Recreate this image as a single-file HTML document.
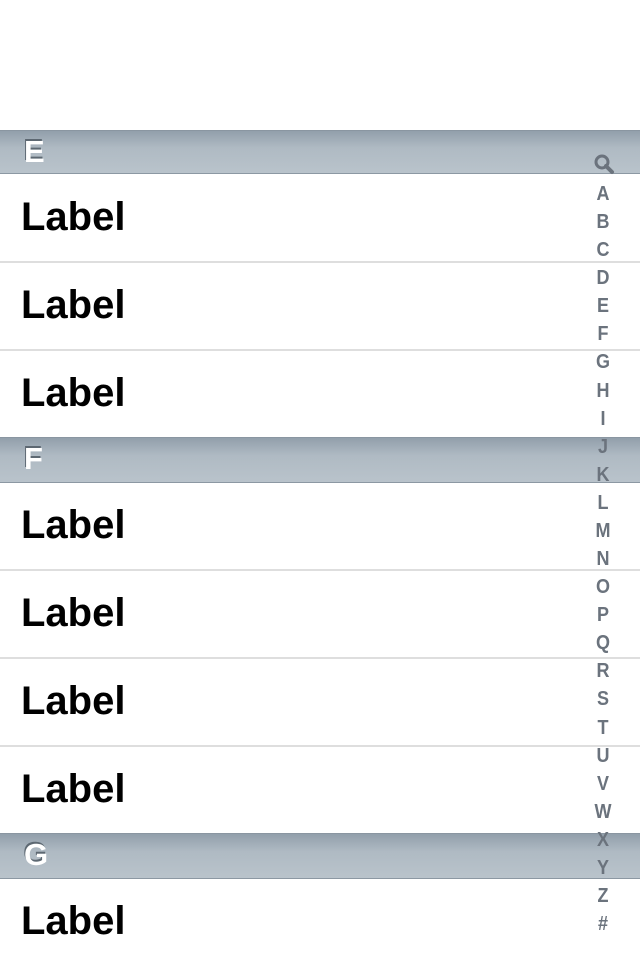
<html><head><style>
body{margin:0;width:640px;height:960px;overflow:hidden;background:#fff;font-family:"Liberation Sans",sans-serif;position:relative}
.h{position:absolute;left:0;width:640px;height:44px;background:linear-gradient(#929fab,#afbac3 40%,#b9c3cb);border-top:1px solid #8a96a1;border-bottom:1px solid #8c98a3;box-sizing:border-box}
.h span{position:absolute;left:24px;top:3px;font-size:31px;font-weight:bold;color:#fff;text-shadow:-1px -2px 0 #5d6872}
.r{position:absolute;left:0;width:640px;height:88px;border-bottom:2px solid #dedede;box-sizing:border-box}
.r span{position:absolute;left:21px;top:20px;font-size:40px;font-weight:bold;color:#000}
.idx{position:absolute;left:588px;width:30px;text-align:center;color:#6b737d;font-weight:bold;font-size:20px;transform:scaleX(0.9)}
</style></head><body>
<div class="h" style="top:130px"><span>E</span></div>
<div class="r" style="top:175px"><span>Label</span></div>
<div class="r" style="top:263px"><span>Label</span></div>
<div class="r" style="top:351px;border-bottom:none"><span>Label</span></div>
<div class="h" style="top:437px;height:46px"><span>F</span></div>
<div class="r" style="top:483px"><span>Label</span></div>
<div class="r" style="top:571px"><span>Label</span></div>
<div class="r" style="top:659px"><span>Label</span></div>
<div class="r" style="top:747px;border-bottom:none"><span>Label</span></div>
<div class="h" style="top:833px;height:46px"><span>G</span></div>
<div class="r" style="top:879px;border-bottom:none"><span>Label</span></div>
<svg style="position:absolute;left:593px;top:153px" width="22" height="22" viewBox="0 0 22 22"><circle cx="9" cy="9" r="6" fill="none" stroke="#6b737d" stroke-width="3"/><path d="M13 13L19 19" stroke="#6b737d" stroke-width="4" stroke-linecap="round"/></svg>
<div id="ix"></div>
<script>
var s="ABCDEFGHIJKLMNOPQRSTUVWXYZ#",h="";
for(var i=0;i<s.length;i++){h+='<div class="idx" style="top:'+(183+i*28.08)+'px">'+s[i]+'</div>';}
document.getElementById('ix').innerHTML=h;
</script>
</body></html>
